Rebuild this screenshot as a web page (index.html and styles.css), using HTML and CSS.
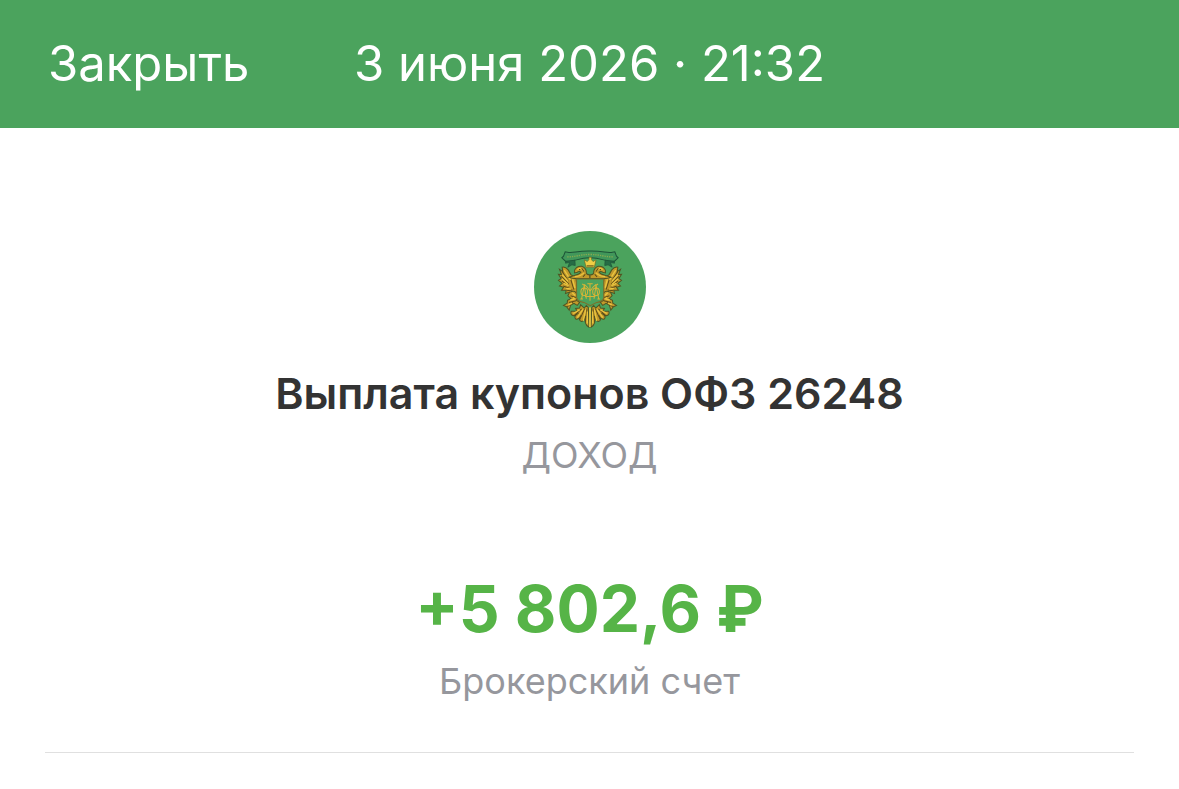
FILE: index.html
```
<!DOCTYPE html>
<html lang="ru">
<head>
  <meta charset="UTF-8">
  <meta name="viewport" content="width=device-width, initial-scale=1.0">
  <title>Выплата купонов</title>
  <link rel="stylesheet" href="styles.css">
</head>
<body>
  <header class="header">
    <button class="close" type="button">Закрыть</button>
    <time class="date" datetime="2026-06-03T21:32">3 июня 2026 · 21:32</time>
  </header>
  <main class="operation">
    <svg class="logo" viewBox="28 28 334 334" aria-hidden="true">
      <defs>
        <!-- left half of the eagle, mirrored for the right one -->
        <g id="half">
          <!-- wing -->
          <path class="gold" d="M112 136 Q122 134 130 144 L138 158 L153 168 L157 199 L154 214 L147 210 L141 219 L134 210 L122 214 L124 205 L110 205 L116 196 L104 192 L112 184 L101 175 L109 170 L101 157 L110 158 L104 142 L114 149 Z"/>
          <path class="feather" d="M112 149 L131 177 M109 163 L132 186 M111 177 L133 193 M115 192 L137 200 M125 206 L143 204 M137 171 L147 203"/>
          <path class="shine" d="M118 145 L137 174 M112 158 L130 178 M111 170 L129 187 M117 184 L132 192 M124 199 L138 201 M143 172 L150 198"/>
          <!-- neck and head -->
          <path class="gold" d="M149 145 Q155 132 170 133 Q183 137 184 150 Q182 158 195 159 V170 H146 L132 166 L150 160 Q164 157 168 151 Q163 147 157 151 L149 153 Z"/>
          <path class="shine" d="M157 143 Q167 136 174 145 M150 164 Q168 163 177 153"/>
          <path class="feather" d="M170 139 L177 149 M181 157 L174 165"/>
          <circle class="dot" cx="164" cy="143" r="2"/>
          <!-- claw -->
          <path class="gold" d="M134 211 Q150 203 154 214 L160 226 L154 234 L164 241 L157 250 L147 244 L137 250 L133 264 L125 254 L116 250 L127 243 L128 235 L138 230 L129 221 Z"/>
          <path class="feather" d="M137 221 L153 226 M132 241 L154 236 M127 254 L144 241"/>
          <path class="shine" d="M142 212 L151 220 M145 226 L150 232 M136 234 L147 231 M130 249 L141 243"/>
          <!-- tail -->
          <path class="gold" d="M192 315 L190 257 L184 250 L178 258 L167 248 L164 258 L152 259 L157 267 L139 267 Q135 278 147 281 L161 273 Q144 283 153 291 Q161 293 169 279 Q158 295 170 298 Q178 297 182 282 Q176 307 192 315 Z"/>
          <path class="feather" d="M186 259 L181 300 M179 260 L164 293 M170 260 L147 281"/>
          <path class="shine" d="M182 262 L175 296 M174 262 L157 286 M187 268 L187 304 M164 263 L145 274 M195 256 V314"/>
          <!-- ribbon -->
          <path class="ribbon" d="M195 88 C160 87 145 94 132 92 L121 90 L116 103 L111 108 L122 118 C143 122 163 107 195 108"/>
          <path class="tail-end" d="M122 119 L122 124 L134 122 L129 136 L141 129 L151 131 L150 115 Z"/>
          <path class="motto" d="M127 105 C150 106 164 98 195 98"/>
        </g>
      </defs>
      <circle class="disc" cx="195" cy="195" r="167"/>
      <use href="#half"/>
      <use href="#half" transform="translate(390 0) scale(-1 1)"/>
      <!-- crown -->
      <path class="crown" d="M183 136 L178 114 L187 119 L192 113 V106 H199 V113 L204 119 L213 114 L208 136 Z"/>
      <path class="feather" d="M185 132 H206"/>
      <!-- shield -->
      <path class="shield" d="M155 171 H236 V226 Q235 239 215 241 L196 251 L177 241 Q157 239 155 226 Z"/>
      <!-- monogram -->
      <path class="mono" d="M172 186 L178 190 L170 230 M178 190 L184 230 M178 187 Q190 196 195 208 Q201 196 213 187 M219 186 L213 190 L221 230 M213 190 L207 230 M195 185 V236 M187 185 H203 M166 231 H174 M217 231 H225 M180 223 H211"/>
      <ellipse class="mono" cx="178" cy="209" rx="10" ry="11"/>
      <ellipse class="mono" cx="213" cy="209" rx="10" ry="11"/>
    </svg>
    <h1 class="title">Выплата купонов ОФЗ 26248</h1>
    <p class="type">ДОХОД</p>
    <p class="amount">+5 802,6 ₽</p>
    <p class="account">Брокерский счет</p>
    <hr class="line">
  </main>
</body>
</html>
```
FILE: styles.css
```
* {
  box-sizing: border-box;
}
body {
  margin: 0;
  background: #fff;
  font-family: Inter, "Noto Sans", sans-serif;
  color: #333;
}
.header {
  display: grid;
  grid-template-columns: 1fr auto 1fr;
  align-items: center;
  min-height: 128px;
  padding: 0 48px;
  background: #4ba35d;
  color: #fff;
  font-size: 49px;
  line-height: 60px;
}
.close {
  justify-self: start;
  padding: 0;
  border: none;
  background: none;
  color: inherit;
  font: inherit;
  cursor: pointer;
}
.operation {
  display: flex;
  flex-direction: column;
  align-items: center;
  padding: 103px 45px 36px;
  text-align: center;
}
.title,
.type,
.amount,
.account {
  margin: 0;
}
.logo {
  width: 112px;
  height: 112px;
}
.title {
  margin-top: 26px;
  font-size: 43px;
  font-weight: 600;
  line-height: 48px;
}
.type {
  margin-top: 16px;
  color: #96979d;
  font-size: 36px;
  line-height: 44px;
}
.amount {
  margin-top: 92px;
  color: #56b447;
  font-size: 64px;
  font-weight: 700;
  line-height: 80px;
}
.account {
  margin-top: 10px;
  color: #96979d;
  font-size: 36px;
  line-height: 44px;
}
.line {
  width: 100%;
  margin: 49px 0 0;
  border: none;
  border-top: 1px solid #e0e0e0;
}

/* emblem */
.disc {
  fill: #4ba35d;
}
.gold {
  fill: #c39a2b;
  stroke: #4f5523;
  stroke-width: 3;
}
.crown {
  fill: #f0cf45;
  stroke: #6b6a26;
  stroke-width: 2;
}
.feather {
  fill: none;
  stroke: #5d4c19;
  stroke-width: 3;
}
.shine {
  fill: none;
  stroke: #ebc540;
  stroke-width: 4;
}
.dot {
  fill: #30451f;
}
.ribbon {
  fill: #41975a;
  stroke: #1d5337;
  stroke-width: 3;
}
.tail-end {
  fill: #266c45;
  stroke: #1d5337;
  stroke-width: 2;
}
.motto {
  fill: none;
  stroke: #86aa4f;
  stroke-width: 4;
  stroke-dasharray: 4 3;
}
.shield {
  fill: #4ba35d;
  stroke: #806c27;
  stroke-width: 3;
}
.mono {
  fill: none;
  stroke: #d8b536;
  stroke-width: 3;
}
```
